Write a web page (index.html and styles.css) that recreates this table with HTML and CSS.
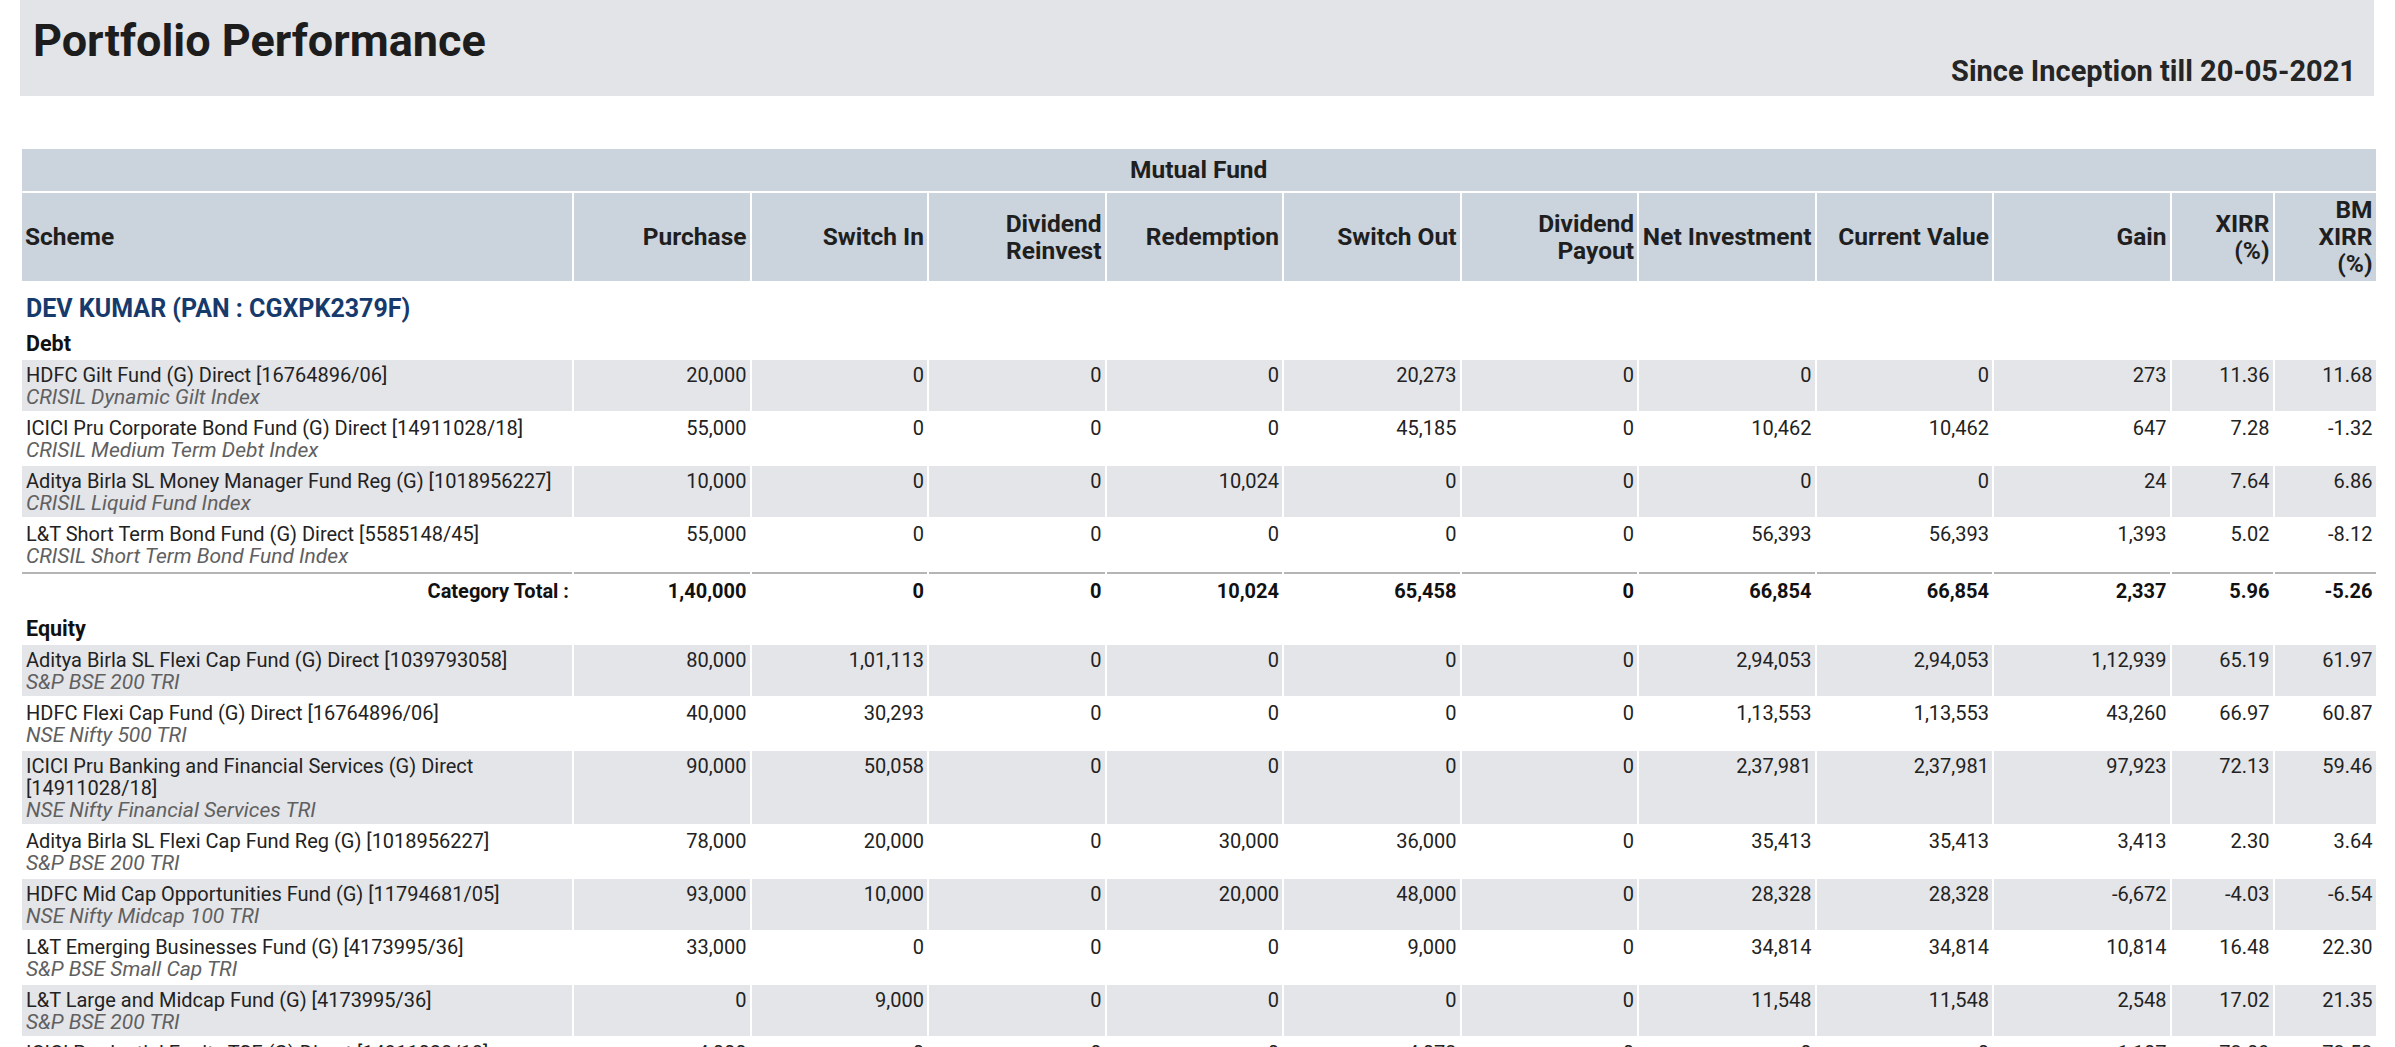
FILE: index.html
```html
<!DOCTYPE html>
<html lang="en">
<head>
<meta charset="utf-8">
<title>Portfolio Performance</title>
<link rel="stylesheet" href="styles.css">
</head>
<body>
<div class="page">
  <header class="report-head">
    <h1 class="title">Portfolio Performance</h1>
    <div class="period">Since Inception till 20-05-2021</div>
  </header>

  <table class="perf">
    <colgroup>
      <col class="c-scheme">
      <col class="c-num"><col class="c-num"><col class="c-num"><col class="c-num"><col class="c-num">
      <col class="c-num"><col class="c-num"><col class="c-num"><col class="c-num">
      <col class="c-pct"><col class="c-pct">
    </colgroup>
    <thead>
      <tr class="band"><th colspan="12">Mutual Fund</th></tr>
      <tr class="cols">
        <th class="left">Scheme</th>
        <th>Purchase</th>
        <th>Switch In</th>
        <th>Dividend<br>Reinvest</th>
        <th>Redemption</th>
        <th>Switch Out</th>
        <th>Dividend<br>Payout</th>
        <th>Net Investment</th>
        <th>Current Value</th>
        <th>Gain</th>
        <th>XIRR<br>(%)</th>
        <th>BM<br>XIRR<br>(%)</th>
      </tr>
    </thead>
    <tbody>
      <tr class="investor"><td colspan="12">DEV KUMAR (PAN : CGXPK2379F)</td></tr>
      <tr class="category"><td colspan="12">Debt</td></tr>

      <tr class="row odd"><td class="scheme">HDFC Gilt Fund (G) Direct [16764896/06]<span class="bm">CRISIL Dynamic Gilt Index</span></td>
        <td>20,000</td><td>0</td><td>0</td><td>0</td><td>20,273</td><td>0</td><td>0</td><td>0</td><td>273</td><td>11.36</td><td>11.68</td></tr>
      <tr class="row"><td class="scheme">ICICI Pru Corporate Bond Fund (G) Direct [14911028/18]<span class="bm">CRISIL Medium Term Debt Index</span></td>
        <td>55,000</td><td>0</td><td>0</td><td>0</td><td>45,185</td><td>0</td><td>10,462</td><td>10,462</td><td>647</td><td>7.28</td><td>-1.32</td></tr>
      <tr class="row odd"><td class="scheme">Aditya Birla SL Money Manager Fund Reg (G) [1018956227]<span class="bm">CRISIL Liquid Fund Index</span></td>
        <td>10,000</td><td>0</td><td>0</td><td>10,024</td><td>0</td><td>0</td><td>0</td><td>0</td><td>24</td><td>7.64</td><td>6.86</td></tr>
      <tr class="row"><td class="scheme">L&amp;T Short Term Bond Fund (G) Direct [5585148/45]<span class="bm">CRISIL Short Term Bond Fund Index</span></td>
        <td>55,000</td><td>0</td><td>0</td><td>0</td><td>0</td><td>0</td><td>56,393</td><td>56,393</td><td>1,393</td><td>5.02</td><td>-8.12</td></tr>
      <tr class="total"><td>Category Total :</td>
        <td>1,40,000</td><td>0</td><td>0</td><td>10,024</td><td>65,458</td><td>0</td><td>66,854</td><td>66,854</td><td>2,337</td><td>5.96</td><td>-5.26</td></tr>

      <tr class="category"><td colspan="12">Equity</td></tr>
      <tr class="row odd"><td class="scheme">Aditya Birla SL Flexi Cap Fund (G) Direct [1039793058]<span class="bm">S&amp;P BSE 200 TRI</span></td>
        <td>80,000</td><td>1,01,113</td><td>0</td><td>0</td><td>0</td><td>0</td><td>2,94,053</td><td>2,94,053</td><td>1,12,939</td><td>65.19</td><td>61.97</td></tr>
      <tr class="row"><td class="scheme">HDFC Flexi Cap Fund (G) Direct [16764896/06]<span class="bm">NSE Nifty 500 TRI</span></td>
        <td>40,000</td><td>30,293</td><td>0</td><td>0</td><td>0</td><td>0</td><td>1,13,553</td><td>1,13,553</td><td>43,260</td><td>66.97</td><td>60.87</td></tr>
      <tr class="row odd"><td class="scheme">ICICI Pru Banking and Financial Services (G) Direct [14911028/18]<span class="bm">NSE Nifty Financial Services TRI</span></td>
        <td>90,000</td><td>50,058</td><td>0</td><td>0</td><td>0</td><td>0</td><td>2,37,981</td><td>2,37,981</td><td>97,923</td><td>72.13</td><td>59.46</td></tr>
      <tr class="row"><td class="scheme">Aditya Birla SL Flexi Cap Fund Reg (G) [1018956227]<span class="bm">S&amp;P BSE 200 TRI</span></td>
        <td>78,000</td><td>20,000</td><td>0</td><td>30,000</td><td>36,000</td><td>0</td><td>35,413</td><td>35,413</td><td>3,413</td><td>2.30</td><td>3.64</td></tr>
      <tr class="row odd"><td class="scheme">HDFC Mid Cap Opportunities Fund (G) [11794681/05]<span class="bm">NSE Nifty Midcap 100 TRI</span></td>
        <td>93,000</td><td>10,000</td><td>0</td><td>20,000</td><td>48,000</td><td>0</td><td>28,328</td><td>28,328</td><td>-6,672</td><td>-4.03</td><td>-6.54</td></tr>
      <tr class="row"><td class="scheme">L&amp;T Emerging Businesses Fund (G) [4173995/36]<span class="bm">S&amp;P BSE Small Cap TRI</span></td>
        <td>33,000</td><td>0</td><td>0</td><td>0</td><td>9,000</td><td>0</td><td>34,814</td><td>34,814</td><td>10,814</td><td>16.48</td><td>22.30</td></tr>
      <tr class="row odd"><td class="scheme">L&amp;T Large and Midcap Fund (G) [4173995/36]<span class="bm">S&amp;P BSE 200 TRI</span></td>
        <td>0</td><td>9,000</td><td>0</td><td>0</td><td>0</td><td>0</td><td>11,548</td><td>11,548</td><td>2,548</td><td>17.02</td><td>21.35</td></tr>
      <tr class="row"><td class="scheme">ICICI Prudential Equity TSF (G) Direct [14911028/18]<span class="bm">NSE Nifty 500 TRI</span></td>
        <td>4,000</td><td>0</td><td>0</td><td>0</td><td>4,073</td><td>0</td><td>0</td><td>0</td><td>1,107</td><td>73.09</td><td>73.53</td></tr>
    </tbody>
  </table>
</div>
</body>
</html>
```

FILE: styles.css
```css
html, body {
  margin: 0;
  padding: 0;
  background: #ffffff;
}

body {
  font-family: Roboto, "Liberation Sans", Arial, sans-serif;
  color: #212121;
}

.page {
  padding: 0 0 0 20px;
}

.report-head {
  width: 2354px;
  height: 96px;
  box-sizing: border-box;
  background: #e3e4e8;
  display: flex;
  justify-content: space-between;
  padding: 0 18px 0 13px;
}

.title {
  margin: 0;
  padding-top: 19px;
  font-size: 45px;
  line-height: 44px;
  font-weight: 700;
  color: #1d1d1d;
}

.period {
  align-self: flex-end;
  padding-bottom: 10px;
  font-size: 29px;
  line-height: 30px;
  font-weight: 700;
  color: #252525;
}

.perf {
  margin-top: 51px;
  margin-left: 0;
  width: 2356px;
  table-layout: fixed;
  border-collapse: separate;
  border-spacing: 2px;
  font-size: 20px;
}

.c-scheme { width: 550px; }
.c-num { width: 175.5px; }
.c-pct { width: 101px; }

.perf th {
  background: #cbd3dc;
  font-weight: 700;
  font-size: 24.5px;
  line-height: 27px;
  color: #1f1f1f;
  text-align: right;
  vertical-align: middle;
  white-space: nowrap;
  padding: 3px 3px 4px;
}

.perf .band th {
  text-align: center;
  padding: 7px 3px 8px;
}

.perf th.left {
  text-align: left;
  padding-left: 3px;
}

.perf td {
  padding: 4px 3px 3px;
  line-height: 22px;
  text-align: right;
  vertical-align: top;
  color: #222222;
}

.perf .row.odd td {
  background: #e4e5e9;
}

.perf td.scheme {
  text-align: left;
  padding-left: 4px;
}

.bm {
  display: block;
  font-size: 21px;
  font-style: italic;
  color: #606060;
}

.perf .investor td {
  text-align: left;
  font-size: 25px;
  line-height: 28px;
  font-weight: 700;
  color: #173a6c;
  padding: 12px 4px 4px;
}

.perf .category td {
  text-align: left;
  font-size: 21.5px;
  line-height: 26px;
  font-weight: 700;
  color: #111111;
  padding: 2px 4px 1px;
}

.perf .total td {
  border-top: 2px solid #b5b5b5;
  font-weight: 700;
  color: #111111;
  padding: 6px 3px 10px;
}
```
